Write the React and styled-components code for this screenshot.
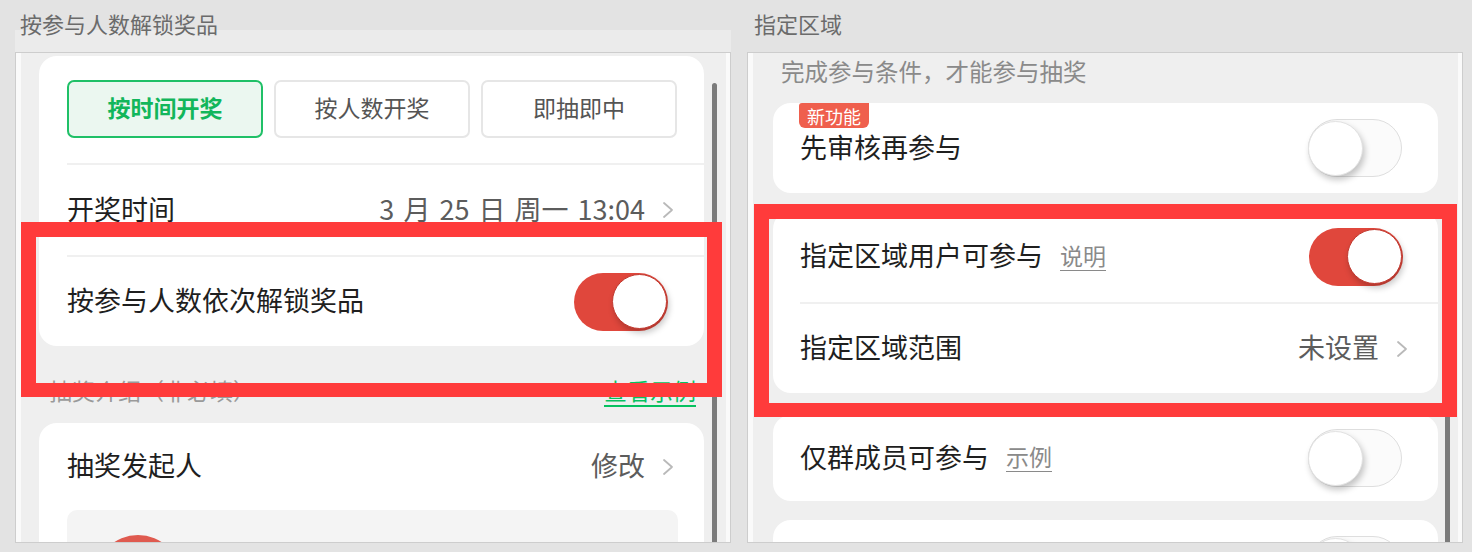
import React from 'react';
import styled, { createGlobalStyle } from 'styled-components';

const GlobalStyle = createGlobalStyle`
  html, body {
    margin: 0;
    padding: 0;
    background: #e3e3e3;
  }
  body {
    font-family: "Noto Sans CJK SC", "Noto Sans", sans-serif;
  }
  * {
    box-sizing: border-box;
  }
`;

const Chevron = () => (
  <svg width="12" height="18" viewBox="0 0 12 18">
    <polyline points="2,2 10,9 2,16" fill="none" stroke="#b9b9b9" strokeWidth="1.8" strokeLinecap="round" strokeLinejoin="round" />
  </svg>
);

const Toggle = ({ on }) => (
  <Track $on={on}>
    <Knob $on={on} />
  </Track>
);

const App = () => {
  return (
    <>
      <GlobalStyle />
      <Page>
        <Column>
          <Title $indent={5}>按参与人数解锁奖品</Title>
          <Band $tone="#ebebeb" />
          <Frame>
            <Scroll $left={23} $right={26}>
              <Card $pad={28} $mt={3}>
                <SegRow>
                  <SegButton $active>按时间开奖</SegButton>
                  <SegButton>按人数开奖</SegButton>
                  <SegButton>即抽即中</SegButton>
                </SegRow>
                <Row $h={92} $line>
                  <Label>开奖时间</Label>
                  <Value $spaced>3 月 25 日 周一 13:04</Value>
                  <Chevron />
                </Row>
                <Row $h={91} $line>
                  <Label>按参与人数依次解锁奖品</Label>
                  <ToggleSlot $mr={6}>
                    <Toggle on />
                  </ToggleSlot>
                </Row>
              </Card>
              <SectionLabel>
                <span>抽奖介绍（非必填）</span>
                <GreenLink>查看示例</GreenLink>
              </SectionLabel>
              <Card $pad={28}>
                <Row $h={87}>
                  <Label>抽奖发起人</Label>
                  <Value>修改</Value>
                  <Chevron />
                </Row>
                <Sponsor>
                  <Avatar />
                </Sponsor>
              </Card>
            </Scroll>
            <ScrollBar $left={696} $top={30} />
          </Frame>
          <Highlight $left={6} $top={222} $w={701} $h={175} />
        </Column>

        <Column>
          <Title $indent={7}>指定区域</Title>
          <Band $tone="transparent" />
          <Frame>
            <Scroll $left={25} $right={24}>
              <Subtitle>完成参与条件，才能参与抽奖</Subtitle>
              <Card $pad={27} $mb={18}>
                <Badge>新功能</Badge>
                <Row $h={90}>
                  <Label>先审核再参与</Label>
                  <ToggleSlot $mr={6}>
                    <Toggle />
                  </ToggleSlot>
                </Row>
              </Card>
              <Card $pad={27} $mb={22}>
                <Row $h={91}>
                  <Label>指定区域用户可参与</Label>
                  <Hint>说明</Hint>
                  <ToggleSlot $mr={5}>
                    <Toggle on />
                  </ToggleSlot>
                </Row>
                <Row $h={91} $line>
                  <Label>指定区域范围</Label>
                  <Value>未设置</Value>
                  <Chevron />
                </Row>
              </Card>
              <Card $pad={27} $mb={19}>
                <Row $h={86}>
                  <Label>仅群成员可参与</Label>
                  <Hint>示例</Hint>
                  <ToggleSlot $mr={6}>
                    <Toggle />
                  </ToggleSlot>
                </Row>
              </Card>
              <Card $pad={27}>
                <Row $h={90}>
                  <Label>&nbsp;</Label>
                  <ToggleSlot $mr={6}>
                    <Toggle />
                  </ToggleSlot>
                </Row>
              </Card>
            </Scroll>
            <ScrollBar $left={697} $top={250} />
          </Frame>
          <Highlight $left={7} $top={204} $w={703} $h={213} />
        </Column>
      </Page>
    </>
  );
};

const Page = styled.div`
  width: 1472px;
  height: 552px;
  overflow: hidden;
  display: flex;
  gap: 16px;
  padding-left: 15px;
`;

const Column = styled.div`
  position: relative;
  width: 716px;
  display: flex;
  flex-direction: column;
`;

const Title = styled.div`
  position: relative;
  z-index: 1;
  height: 30px;
  padding: 12px 0 0 ${(p) => p.$indent}px;
  font-size: 22px;
  line-height: 22px;
  color: #6b6b6b;
  white-space: nowrap;
`;

const Band = styled.div`
  height: 22px;
  background: ${(p) => p.$tone};
`;

const Frame = styled.div`
  position: relative;
  height: 491px;
  border: 1px solid #cdcdcd;
  background: #efefef;
  box-shadow: inset 5px 0 #fafafa, inset -4px 0 #fafafa;
  overflow: hidden;
`;

const Scroll = styled.div`
  display: flex;
  flex-direction: column;
  padding: 0 ${(p) => p.$right}px 0 ${(p) => p.$left}px;
`;

const ScrollBar = styled.div`
  position: absolute;
  left: ${(p) => p.$left}px;
  top: ${(p) => p.$top}px;
  bottom: -6px;
  width: 5px;
  border-radius: 3px;
  background: #7b7b7b;
`;

const Card = styled.div`
  position: relative;
  background: #fff;
  border-radius: 18px;
  padding-left: ${(p) => p.$pad}px;
  margin-top: ${(p) => p.$mt || 0}px;
  margin-bottom: ${(p) => p.$mb || 0}px;
  flex-shrink: 0;
`;

const SegRow = styled.div`
  display: grid;
  grid-template-columns: repeat(3, 196px);
  gap: 11px;
  padding: 24px 0 25px 0;
`;

const SegButton = styled.div`
  height: 58px;
  display: flex;
  align-items: center;
  justify-content: center;
  padding-bottom: 4px;
  border-radius: 7px;
  border: 2px solid ${(p) => (p.$active ? '#1fc067' : '#e6e6e6')};
  background: ${(p) => (p.$active ? '#ebf7f0' : '#fff')};
  color: ${(p) => (p.$active ? '#12b65b' : '#555')};
  font-size: 23px;
  font-weight: ${(p) => (p.$active ? 700 : 400)};
`;

const Row = styled.div`
  height: ${(p) => p.$h}px;
  display: flex;
  align-items: center;
  padding-right: 30px;
  border-top: ${(p) => (p.$line ? '2px solid #f0f0f0' : 'none')};
`;

const Label = styled.div`
  margin-bottom: 4px;
  font-size: 27px;
  color: #1f1f1f;
  white-space: nowrap;
`;

const Value = styled.div`
  margin: 0 17px 4px auto;
  font-size: 27px;
  color: #5c5c5c;
  white-space: nowrap;
  word-spacing: ${(p) => (p.$spaced ? '3px' : 'normal')};
`;

const Hint = styled.span`
  margin: 0 0 4px 17px;
  font-size: 23px;
  color: #8a8a8a;
  text-decoration: underline;
  text-underline-offset: 5px;
  text-decoration-thickness: 1px;
`;

const ToggleSlot = styled.div`
  margin-left: auto;
  margin-right: ${(p) => p.$mr}px;
  display: flex;
`;

const Track = styled.div`
  position: relative;
  width: 94px;
  height: 58px;
  border-radius: 29px;
  background: ${(p) => (p.$on ? '#e0473c' : '#fbfbfb')};
  border: ${(p) => (p.$on ? 'none' : '1.5px solid #dedede')};
`;

const Knob = styled.div`
  position: absolute;
  top: 1px;
  ${(p) => (p.$on ? 'right: 1px;' : 'left: -1px;')}
  width: 55px;
  height: 55px;
  border-radius: 50%;
  background: #fff;
  border: 1px solid ${(p) => (p.$on ? '#c23a30' : '#e2e2e2')};
  box-shadow: 2px 4px 6px rgba(0, 0, 0, 0.22);
`;

const SectionLabel = styled.div`
  height: 77px;
  display: flex;
  align-items: center;
  justify-content: space-between;
  padding: 10px 8px 0 10px;
  font-size: 23px;
  color: #9a9a9a;
  flex-shrink: 0;
`;

const GreenLink = styled.span`
  color: #07c160;
  text-decoration: underline;
  text-underline-offset: 5px;
`;

const Sponsor = styled.div`
  margin-right: 26px;
  height: 120px;
  border-radius: 10px;
  background: #f4f4f4;
  padding: 25px 0 0 28px;
`;

const Avatar = styled.div`
  width: 86px;
  height: 86px;
  border-radius: 50%;
  background: #df5a4f;
`;

const Subtitle = styled.div`
  height: 50px;
  display: flex;
  align-items: center;
  padding: 0 0 15px 8px;
  font-size: 23.5px;
  color: #8a8a8a;
  flex-shrink: 0;
`;

const Badge = styled.div`
  position: absolute;
  top: 0;
  left: 26px;
  height: 25px;
  padding: 0 8px;
  display: flex;
  align-items: center;
  border-radius: 3px 0 6px 6px;
  background: #ef5f4d;
  color: #fff;
  font-size: 18px;
`;

const Highlight = styled.div`
  position: absolute;
  left: ${(p) => p.$left}px;
  top: ${(p) => p.$top}px;
  width: ${(p) => p.$w}px;
  height: ${(p) => p.$h}px;
  border: 15px solid #ff3b3b;
  border-bottom-width: 14px;
  pointer-events: none;
`;

export default App;
